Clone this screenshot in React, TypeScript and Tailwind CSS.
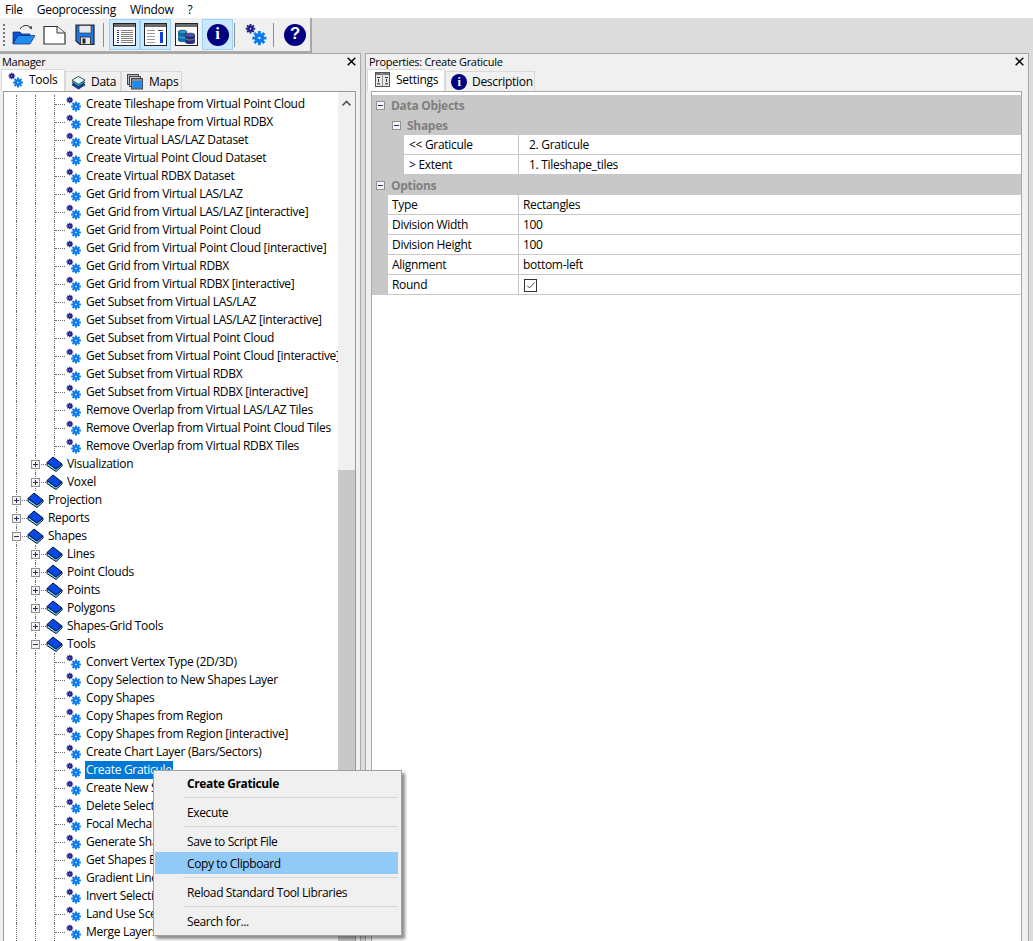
import React from "react";

const font = "font-['Open_Sans','Noto_Sans',sans-serif]";

function Gears({ size = 16 }: { size?: number }) {
  const cog = (cx: number, cy: number, r: number, col: string) => {
    const teeth = [];
    for (let i = 0; i < 8; i++) {
      const a = (i * Math.PI) / 4;
      teeth.push(
        <line key={i} x1={cx} y1={cy} x2={cx + Math.cos(a) * r} y2={cy + Math.sin(a) * r} stroke={col} strokeWidth={r * 0.4} />
      );
    }
    return (
      <g>
        {teeth}
        <circle cx={cx} cy={cy} r={r * 0.68} fill={col} />
        <circle cx={cx} cy={cy} r={r * 0.16} fill="#ffffff" />
      </g>
    );
  };
  return (
    <svg width={size} height={size} viewBox="0 0 16 16" className="shrink-0">
      {cog(3.8, 4, 3.3, "#20208c")}
      {cog(10, 10.5, 4.9, "#0a7cf0")}
    </svg>
  );
}

function Book() {
  return (
    <svg width="17" height="16" viewBox="0 0 17 16" className="shrink-0">
      <path d="M1 6.5 L1 9.5 L10 15.5 L16 10 L16 8 L10 13 Z" fill="#74d8ee" stroke="#00103c" strokeWidth="1" strokeLinejoin="round" />
      <path d="M1 6.5 L7 1 L16 8 L10 13 Z" fill="#0a48e6" stroke="#00103c" strokeWidth="1" strokeLinejoin="round" />
    </svg>
  );
}

function Box({ open }: { open: boolean }) {
  return (
    <span className="absolute top-[5px] left-[-4px] z-10 flex h-[9px] w-[9px] items-center justify-center border border-[#8e8f8f] bg-[#f4f4f4]">
      <span className="absolute h-px w-[5px] bg-[#2a2a6a]" />
      {!open && <span className="absolute h-[5px] w-px bg-[#2a2a6a]" />}
    </span>
  );
}

type R = { l: 1 | 2 | 3; t: string; open?: boolean; sel?: boolean };

const rows: R[] = [
  ...[
    "Create Tileshape from Virtual Point Cloud",
    "Create Tileshape from Virtual RDBX",
    "Create Virtual LAS/LAZ Dataset",
    "Create Virtual Point Cloud Dataset",
    "Create Virtual RDBX Dataset",
    "Get Grid from Virtual LAS/LAZ",
    "Get Grid from Virtual LAS/LAZ [interactive]",
    "Get Grid from Virtual Point Cloud",
    "Get Grid from Virtual Point Cloud [interactive]",
    "Get Grid from Virtual RDBX",
    "Get Grid from Virtual RDBX [interactive]",
    "Get Subset from Virtual LAS/LAZ",
    "Get Subset from Virtual LAS/LAZ [interactive]",
    "Get Subset from Virtual Point Cloud",
    "Get Subset from Virtual Point Cloud [interactive]",
    "Get Subset from Virtual RDBX",
    "Get Subset from Virtual RDBX [interactive]",
    "Remove Overlap from Virtual LAS/LAZ Tiles",
    "Remove Overlap from Virtual Point Cloud Tiles",
    "Remove Overlap from Virtual RDBX Tiles",
  ].map((t) => ({ l: 3 as const, t })),
  { l: 2, t: "Visualization" },
  { l: 2, t: "Voxel" },
  { l: 1, t: "Projection" },
  { l: 1, t: "Reports" },
  { l: 1, t: "Shapes", open: true },
  { l: 2, t: "Lines" },
  { l: 2, t: "Point Clouds" },
  { l: 2, t: "Points" },
  { l: 2, t: "Polygons" },
  { l: 2, t: "Shapes-Grid Tools" },
  { l: 2, t: "Tools", open: true },
  ...[
    "Convert Vertex Type (2D/3D)",
    "Copy Selection to New Shapes Layer",
    "Copy Shapes",
    "Copy Shapes from Region",
    "Copy Shapes from Region [interactive]",
    "Create Chart Layer (Bars/Sectors)",
  ].map((t) => ({ l: 3 as const, t })),
  { l: 3, t: "Create Graticule", sel: true },
  ...[
    "Create New Shapes Layer",
    "Delete Selection from Shapes Layer",
    "Focal Mechanism Beachballs",
    "Generate Shapes",
    "Get Shapes Extents",
    "Gradient Lines",
    "Invert Selection",
    "Land Use Scenario Generator",
    "Merge Layers",
  ].map((t) => ({ l: 3 as const, t })),
];

function Guide({ hz, w }: { hz?: boolean; w: string }) {
  return (
    <span className={`relative h-full shrink-0 ${w}`}>
      <span className="absolute top-0 bottom-0 left-0 border-l border-dotted border-[#707070]" />
      {hz && <span className="absolute top-[9px] left-px right-px border-t border-dotted border-[#707070]" />}
    </span>
  );
}

function Branch({ open }: { open: boolean }) {
  return (
    <>
      <span className="relative h-full w-[11px] shrink-0">
        <span className="absolute top-0 bottom-0 left-0 border-l border-dotted border-[#707070]" />
        <span className="absolute top-[9px] left-px right-0 border-t border-dotted border-[#707070]" />
        <Box open={open} />
      </span>
      <span className="mr-[3px] flex">
        <Book />
      </span>
    </>
  );
}

function Row({ r }: { r: R }) {
  return (
    <div className="flex h-[18px] items-center whitespace-nowrap pl-[12px]">
      {r.l === 1 ? <Branch open={!!r.open} /> : <Guide w="w-[19px]" />}
      {r.l === 2 && <Branch open={!!r.open} />}
      {r.l === 3 && (
        <>
          <Guide w="w-[19px]" />
          <Guide hz w="w-[12px]" />
          <span className="mr-[3px] flex">
            <Gears />
          </span>
        </>
      )}
      <span className={`px-[1px] leading-[18px] ${r.sel ? "bg-[#0078d7] text-white" : "text-black"}`}>{r.t}</span>
    </div>
  );
}

function Close() {
  return (
    <svg width="9" height="9" viewBox="0 0 9 9" className="shrink-0">
      <path d="M0.7 0.7 L8.3 8.3 M8.3 0.7 L0.7 8.3" stroke="#000" strokeWidth="1.5" />
    </svg>
  );
}

function DocIcon({ kind }: { kind: "list" | "bar" | "db" }) {
  return (
    <svg width="23" height="23" viewBox="0 0 23 23">
      <rect x="0.5" y="0.5" width="22" height="22" fill="#fff" stroke="#222" />
      <rect x="1" y="1" width="21" height="3" fill="#6a6a6a" />
      {kind === "list" &&
        [7, 9, 11, 13, 15, 17, 19].map((y) => (
          <g key={y}>
            <rect x="4" y={y} width="2" height="1" fill="#2030b0" />
            <rect x="8" y={y} width="12" height="1" fill="#808080" />
          </g>
        ))}
      {kind === "bar" && (
        <g>
          {[7, 10, 13, 16, 19].map((y) => (
            <rect key={y} x="3" y={y} width="8" height="1" fill="#999" />
          ))}
          <rect x="14" y="7" width="5" height="1" fill="#445" />
          <rect x="16" y="9" width="3" height="11" fill="#1040e0" />
        </g>
      )}
      {kind === "db" && (
        <g>
          <rect x="3" y="9" width="9" height="8" fill="#0b6fb0" />
          <ellipse cx="7.5" cy="9" rx="4.5" ry="2" fill="#2a8fc8" stroke="#123" strokeWidth="0.5" />
          <ellipse cx="7.5" cy="17" rx="4.5" ry="2" fill="#0b6fb0" />
          <rect x="10" y="12" width="10" height="7" fill="#2a2f80" />
          <ellipse cx="15" cy="12" rx="5" ry="2" fill="#5055a8" stroke="#123" strokeWidth="0.5" />
          <ellipse cx="15" cy="19" rx="5" ry="2" fill="#2a2f80" />
          <path d="M10 15 a5 2 0 0 0 10 0" fill="none" stroke="#aab" strokeWidth="0.6" />
          <path d="M3 13 a4.5 2 0 0 0 7 1.5" fill="none" stroke="#9cc" strokeWidth="0.6" />
        </g>
      )}
    </svg>
  );
}

function Circle({ q, size = 22 }: { q: string; size?: number }) {
  return (
    <span
      style={{ width: size, height: size, fontSize: size * 0.76 }}
      className={`flex shrink-0 items-center justify-center rounded-full bg-[#000080] font-bold leading-none text-white ${
        q === "i" ? "font-['Liberation_Serif',serif]" : "font-['Liberation_Sans',sans-serif]"
      }`}
    >
      {q}
    </span>
  );
}

function ToolBar() {
  return (
    <div className="flex h-[35px] w-[312px] shrink-0 items-center border-r-2 border-b-2 border-[#a8a8a8] bg-[#f0f0f0] pl-[3px]">
      <span className="flex h-[22px] w-[3px] flex-col justify-between">
        {[0, 1, 2, 3, 4, 5].map((i) => (
          <span key={i} className="h-[2px] w-[2px] bg-[#777]" />
        ))}
      </span>
      <svg width="23" height="22" viewBox="0 0 23 22" className="ml-[6px]">
        <path d="M8 5 C11 0.5 16 0.5 19 4" fill="none" stroke="#222" strokeWidth="1" />
        <path d="M19.5 5.5 L20 2 L17 3.5 Z" fill="#222" />
        <path d="M1 20 V8 H8 L10 10 H18 V12 H7 Z" fill="#0a50d0" stroke="#062a80" strokeWidth="0.7" />
        <path d="M1 20 L6 11.5 H23 L18 20 Z" fill="#1e8cf0" stroke="#062a80" strokeWidth="0.7" />
      </svg>
      <svg width="23" height="22" viewBox="0 0 23 22" className="ml-[8px]">
        <path d="M1 2.5 H14 L22 9 V20 H1 Z" fill="#fff" stroke="#333" strokeWidth="1.2" />
        <path d="M14 2.5 V9 H22" fill="#eee" stroke="#333" strokeWidth="1" />
      </svg>
      <svg width="20" height="22" viewBox="0 0 20 22" className="ml-[9px]">
        <path d="M1 1 H19 V20.5 H5 L1 17 Z" fill="#1e78e8" stroke="#222" strokeWidth="1.2" />
        <rect x="4" y="1.5" width="12" height="7.5" fill="#e8e8e8" stroke="#222" strokeWidth="0.6" />
        <rect x="5.5" y="13" width="10" height="7.5" fill="#e8e8e8" stroke="#222" strokeWidth="0.8" />
        <rect x="7.5" y="14.5" width="3" height="5" fill="#222" />
      </svg>
      <span className="ml-[8px] h-[24px] w-px bg-[#909090]" />
      <span className="ml-[5px] flex h-[31px] w-[31px] items-center justify-center border border-[#99d1ff] bg-[#cce8ff]">
        <DocIcon kind="list" />
      </span>
      <span className="flex h-[31px] w-[31px] items-center justify-center border border-[#99d1ff] bg-[#cce8ff]">
        <DocIcon kind="bar" />
      </span>
      <span className="flex h-[31px] w-[31px] items-center justify-center">
        <DocIcon kind="db" />
      </span>
      <span className="flex h-[31px] w-[31px] items-center justify-center border border-[#99d1ff] bg-[#cce8ff]">
        <Circle q="i" />
      </span>
      <span className="ml-[1px] h-[24px] w-px bg-[#909090]" />
      <span className="ml-[10px] flex">
        <Gears size={23} />
      </span>
      <span className="ml-[5px] h-[24px] w-px bg-[#909090]" />
      <span className="ml-[10px] flex">
        <Circle q="?" />
      </span>
    </div>
  );
}

function Tab({ active, w, icon, label, pad }: { active?: boolean; w: string; icon: React.ReactNode; label: string; pad: string }) {
  return (
    <div
      className={`flex items-center border border-b-0 border-[#d9d9d9] ${w} ${pad} ${
        active ? "relative z-10 h-[22px] bg-white pb-[2px]" : "mt-[2px] h-[20px] bg-[#f0f0f0] pt-[1px]"
      }`}
    >
      {icon}
      <span>{label}</span>
    </div>
  );
}

function Layers() {
  return (
    <svg width="15" height="15" viewBox="0 0 16 15" className="shrink-0">
      <path d="M8 6 L15 10 L8 14.5 L1 10 Z" fill="#1040d0" stroke="#002" strokeWidth="0.7" />
      <path d="M8 3.5 L15 7.5 L8 12 L1 7.5 Z" fill="#20b0b0" stroke="#002" strokeWidth="0.7" />
      <path d="M8 1 L15 5 L8 9.5 L1 5 Z" fill="#dff4f4" stroke="#002" strokeWidth="0.7" />
    </svg>
  );
}

function MapsIcon() {
  return (
    <svg width="16" height="16" viewBox="0 0 16 16" className="shrink-0">
      <rect x="0.5" y="0.5" width="11" height="10" fill="#bbb" stroke="#445" />
      <rect x="2.5" y="2.5" width="11" height="10" fill="#ccc" stroke="#445" />
      <rect x="4.5" y="4.5" width="11" height="10.5" fill="#8a8a8a" stroke="#445" />
      <rect x="5.5" y="7" width="9" height="7" fill="#1a8cf0" />
    </svg>
  );
}

function SettingsIcon() {
  return (
    <svg width="15" height="15" viewBox="0 0 15 15" className="shrink-0">
      <rect x="0.5" y="0.5" width="14" height="14" fill="#e8e8e8" stroke="#555" />
      <rect x="1" y="1" width="13" height="2" fill="#777" />
      <rect x="7" y="1" width="1" height="13" fill="#999" />
      {[3, 11].map((x) => (
        <g key={x}>
          <rect x={x - 1} y="5" width="3" height="1" fill="#333" />
          <rect x={x} y="7" width="1" height="3" fill="#333" />
          <rect x={x - 1} y="11" width="3" height="1.5" fill="#666" />
        </g>
      ))}
    </svg>
  );
}

function Minus() {
  return (
    <span className="relative flex h-[9px] w-[9px] items-center justify-center border border-[#909090] bg-[#f6f6f6]">
      <span className="h-px w-[5px] bg-[#2a2a6a]" />
    </span>
  );
}

function Head({ t, indent }: { t: string; indent: boolean }) {
  return (
    <div className={`flex h-[20px] items-center font-bold text-[#808080] ${indent ? "pl-[20px]" : "pl-[4px]"}`}>
      <Minus />
      <span className="ml-[6px] pt-[1px]">{t}</span>
    </div>
  );
}

function PropRow({ k, v, nested }: { k: string; v: React.ReactNode; nested?: boolean }) {
  return (
    <div className={`flex h-[20px] items-center border-b border-[#c8c8c8] bg-white ${nested ? "ml-[32px]" : "ml-[16px]"}`}>
      <span className={`flex h-full items-center border-r border-[#c8c8c8] pt-[1px] ${nested ? "w-[115px] pl-[5px]" : "w-[131px] pl-[4px]"}`}>{k}</span>
      <span className={`flex h-full items-center pt-[1px] ${nested ? "pl-[10px]" : "pl-[4px]"}`}>{v}</span>
    </div>
  );
}

function Menu() {
  const Sep = () => <div className="my-[3px] ml-[29px] mr-[3px] h-px bg-[#d7d7d7]" />;
  const Item = ({ t, bold, hi }: { t: string; bold?: boolean; hi?: boolean }) => (
    <div className={`ml-[1px] mr-[3px] flex h-[22px] items-center pt-[1px] pl-[32px] ${bold ? "font-bold" : ""} ${hi ? "bg-[#91c9f7]" : ""}`}>{t}</div>
  );
  return (
    <div className="absolute top-[770px] left-[153px] z-20 w-[249px] border border-[#a0a0a0] bg-[#f0f0f0] pt-[1px] pb-[3px] tracking-[-0.38px] text-black shadow-[3px_3px_3px_rgba(0,0,0,0.45)]">
      <Item t="Create Graticule" bold />
      <Sep />
      <Item t="Execute" />
      <Sep />
      <Item t="Save to Script File" />
      <Item t="Copy to Clipboard" hi />
      <Sep />
      <Item t="Reload Standard Tool Libraries" />
      <Sep />
      <Item t="Search for..." />
    </div>
  );
}

export default function App() {
  return (
    <div className={`relative flex h-[941px] w-[1033px] flex-col overflow-hidden bg-[#dcdcdc] text-[12px] leading-[16px] tracking-[-0.3px] text-black ${font}`}>
      <div className="flex h-[18px] shrink-0 items-center gap-[14px] bg-white pt-[2px] pl-[5px]">
        <span>File</span>
        <span>Geoprocessing</span>
        <span>Window</span>
        <span>?</span>
      </div>
      <ToolBar />
      <div className="flex min-h-0 flex-1 gap-[4px] pr-[4px]">
        <div className="flex h-[900px] w-[361px] shrink-0 flex-col border-r border-t border-[#a8a8a8] bg-[#f0f0f0]">
          <div className="flex h-[15px] shrink-0 items-center justify-between pr-[4px] pl-[2px] text-[11px]">
            <span>Manager</span>
            <Close />
          </div>
          <div className="flex h-[22px] shrink-0 pl-[1px]">
            <Tab active w="w-[64px]" pad="pl-[6px] gap-[5px]" icon={<Gears />} label="Tools" />
            <Tab w="w-[56px]" pad="pl-[5px] gap-[5px]" icon={<Layers />} label="Data" />
            <Tab w="w-[61px]" pad="pl-[5px] gap-[6px]" icon={<MapsIcon />} label="Maps" />
          </div>
          <div className="ml-[3px] mr-[4px] flex min-h-0 flex-1 overflow-hidden border border-[#9a9a9a] bg-white">
            <div className="min-w-0 flex-1 overflow-hidden pt-[3px]">
              {rows.map((r, i) => (
                <Row key={i} r={r} />
              ))}
            </div>
            <div className="relative w-[17px] shrink-0 bg-[#f0f0f0]">
              <svg width="17" height="17" viewBox="0 0 17 17" className="mt-[3px]">
                <path d="M4.5 10.5 L8.5 6.5 L12.5 10.5" fill="none" stroke="#505050" strokeWidth="1.6" />
              </svg>
              <div className="absolute top-[378px] bottom-0 left-0 w-full bg-[#c8c8c8]" />
            </div>
          </div>
        </div>
        <div className="flex h-[900px] min-w-0 flex-1 flex-col border-x border-t border-[#a8a8a8] bg-[#f0f0f0]">
          <div className="flex h-[15px] shrink-0 items-center justify-between pr-[4px] pl-[3px] text-[11px]">
            <span>Properties: Create Graticule</span>
            <Close />
          </div>
          <div className="flex h-[22px] shrink-0 pl-[1px]">
            <Tab active w="w-[78px]" pad="pl-[7px] gap-[6px]" icon={<SettingsIcon />} label="Settings" />
            <Tab w="w-[90px]" pad="pl-[5px] gap-[5px]" icon={<Circle q="i" size={16} />} label="Description" />
          </div>
          <div className="ml-[5px] mr-[6px] flex-1 border border-[#a8a8a8] bg-white pt-[3px]">
            <div className="bg-[#c8c8c8]">
              <Head t="Data Objects" indent={false} />
              <Head t="Shapes" indent />
              <PropRow nested k="<< Graticule" v="2. Graticule" />
              <PropRow nested k="> Extent" v="1. Tileshape_tiles" />
              <Head t="Options" indent={false} />
              <PropRow k="Type" v="Rectangles" />
              <PropRow k="Division Width" v="100" />
              <PropRow k="Division Height" v="100" />
              <PropRow k="Alignment" v="bottom-left" />
              <PropRow
                k="Round"
                v={
                  <span className="ml-px flex h-[13px] w-[13px] items-center justify-center border border-[#333]">
                    <svg width="11" height="11" viewBox="0 0 11 11">
                      <path d="M2 5.5 L4.5 8 L9.5 2.5" fill="none" stroke="#555" strokeWidth="1" />
                    </svg>
                  </span>
                }
              />
            </div>
          </div>
        </div>
      </div>
      <Menu />
    </div>
  );
}
